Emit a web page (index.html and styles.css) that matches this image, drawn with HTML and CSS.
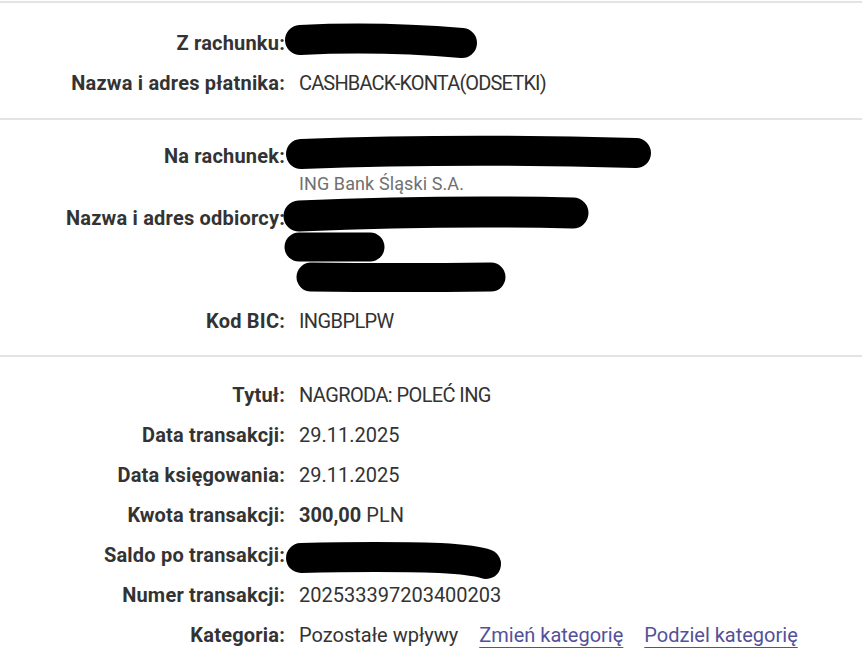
FILE: index.html
```html
<!DOCTYPE html>
<html lang="pl">
<head>
<meta charset="utf-8">
<title>Szczegóły transakcji</title>
<link rel="stylesheet" href="styles.css">
</head>
<body>
<div class="page">
  <section class="section s1">
    <div class="row">
      <div class="label">Z rachunku:</div>
      <div class="value">&nbsp;</div>
    </div>
    <div class="row">
      <div class="label">Nazwa i adres płatnika:</div>
      <div class="value caps caps-tight">CASHBACK-KONTA(ODSETKI)</div>
    </div>
  </section>
  <section class="section s2">
    <div class="row row-account">
      <div class="label">Na rachunek:</div>
      <div class="value">
        <div class="line">&nbsp;</div>
        <div class="sub">ING Bank Śląski S.A.</div>
      </div>
    </div>
    <div class="row row-recipient">
      <div class="label">Nazwa i adres odbiorcy:</div>
      <div class="value">
        <div class="line">&nbsp;</div>
        <div class="line addr">&nbsp;</div>
        <div class="line addr">&nbsp;</div>
      </div>
    </div>
    <div class="row">
      <div class="label">Kod BIC:</div>
      <div class="value caps">INGBPLPW</div>
    </div>
  </section>
  <section class="section s3">
    <div class="row">
      <div class="label">Tytuł:</div>
      <div class="value caps">NAGRODA: POLEĆ ING</div>
    </div>
    <div class="row">
      <div class="label">Data transakcji:</div>
      <div class="value">29.11.2025</div>
    </div>
    <div class="row">
      <div class="label">Data księgowania:</div>
      <div class="value">29.11.2025</div>
    </div>
    <div class="row">
      <div class="label">Kwota transakcji:</div>
      <div class="value"><strong class="amount">300,00</strong> PLN</div>
    </div>
    <div class="row">
      <div class="label">Saldo po transakcji:</div>
      <div class="value">&nbsp;</div>
    </div>
    <div class="row">
      <div class="label">Numer transakcji:</div>
      <div class="value">202533397203400203</div>
    </div>
    <div class="row">
      <div class="label">Kategoria:</div>
      <div class="value value-links">
        <span>Pozostałe wpływy</span>
        <a class="link" href="#">Zmień kategorię</a>
        <a class="link" href="#">Podziel kategorię</a>
      </div>
    </div>
  </section>

  <svg class="redactions" width="862" height="655" viewBox="0 0 862 655" aria-hidden="true">
    <g fill="none" stroke="#000" stroke-linecap="round" stroke-linejoin="round">
      <path d="M300,40 Q380,36 462,43" stroke-width="30"/>
      <path d="M301,154 Q460,148 636,153" stroke-width="30"/>
      <path d="M299,216 Q440,210 573,213" stroke-width="31"/>
      <path d="M299,247 L370,247" stroke-width="29"/>
      <path d="M311,277 Q400,278 491,277" stroke-width="29"/>
      <path d="M301,558 Q380,556 440,558 Q475,560 486,564" stroke-width="30"/>
    </g>
  </svg>
</div>
</body>
</html>
```
FILE: styles.css
```css
html, body {
  margin: 0;
  padding: 0;
  background: #ffffff;
}

body {
  font-family: Roboto, "Liberation Sans", sans-serif;
  font-size: 20px;
  color: #333333;
}

.page {
  position: relative;
  width: 862px;
  height: 655px;
  overflow: hidden;
}

.section {
  border-top: 2px solid #e3e3e3;
}

.s1 {
  margin-top: 1px;
  padding: 20px 0 15px;
}

.s2 {
  padding: 16px 0 14px;
}

.s3 {
  padding: 18px 0 0;
}

.row {
  display: grid;
  grid-template-columns: 285px 1fr;
  column-gap: 14px;
  padding: 8px 0;
  line-height: 24px;
}

.label {
  text-align: right;
  font-weight: 700;
  color: #333333;
  letter-spacing: 0.2px;
  white-space: nowrap;
}

.value {
  font-weight: 400;
  color: #333333;
  white-space: nowrap;
}

.caps {
  letter-spacing: -0.6px;
}

.caps-tight {
  letter-spacing: -0.85px;
}

.row-account {
  padding-bottom: 4px;
}

.sub {
  margin-top: 6px;
  font-size: 18px;
  line-height: 20px;
  color: #707070;
  letter-spacing: 0.1px;
}

.row-recipient {
  padding-bottom: 13px;
}

.addr {
  margin-top: 5px;
}

.amount {
  font-weight: 700;
}

.value-links {
  display: flex;
  gap: 21px;
}

.link {
  color: #525199;
  text-decoration: underline;
  text-underline-offset: 5px;
  text-decoration-thickness: 1px;
}

.redactions {
  position: absolute;
  top: 0;
  left: 0;
  pointer-events: none;
}
```
